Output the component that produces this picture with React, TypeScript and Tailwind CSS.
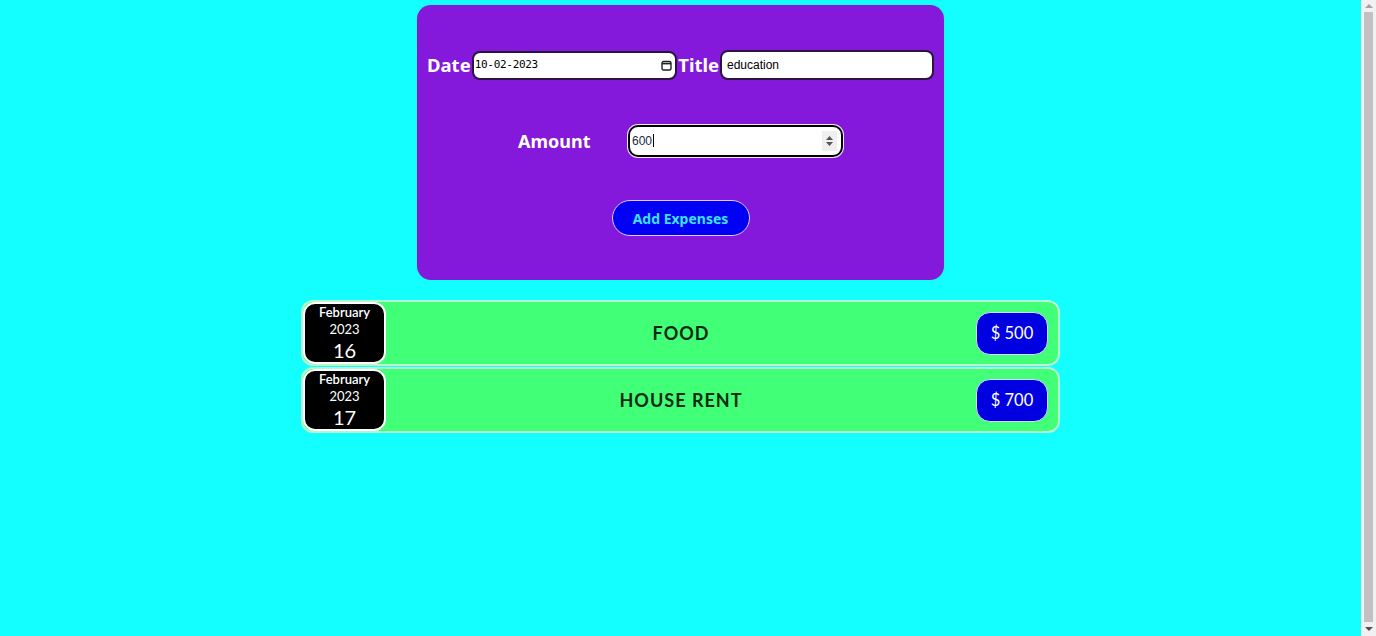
import React from 'react';

const expenses = [
  { month: 'February', year: '2023', day: '16', title: 'FOOD', amount: '$ 500' },
  { month: 'February', year: '2023', day: '17', title: 'HOUSE RENT', amount: '$ 700' },
];

const CalendarIcon = () => (
  <svg width="11" height="11" viewBox="0 0 11 11" fill="none" className="shrink-0">
    <rect x="1" y="1.5" width="9" height="8.5" rx="1.5" stroke="#222" strokeWidth="1.4" />
    <line x1="1" y1="3.6" x2="10" y2="3.6" stroke="#222" strokeWidth="1.6" />
  </svg>
);

const Spinner = () => (
  <div className="flex h-[20px] w-[15px] flex-col items-center justify-center gap-[2px] bg-[#efefef]">
    <svg width="7" height="4" viewBox="0 0 7 4"><path d="M0 4L3.5 0L7 4Z" fill="#555" /></svg>
    <svg width="7" height="4" viewBox="0 0 7 4"><path d="M0 0L3.5 4L7 0Z" fill="#555" /></svg>
  </div>
);

// the window's scroll bar, as it shows in the screenshot
const ScrollBar = () => (
  <div className="flex w-[15px] shrink-0 flex-col items-center bg-[#f1f1f1]">
    <div className="flex h-[12px] items-center">
      <svg width="8" height="4" viewBox="0 0 8 4"><path d="M0 4L4 0L8 4Z" fill="#a3a3a3" /></svg>
    </div>
    <div className="w-[9px] flex-1 bg-[#c1c1c1]" />
    <div className="flex h-[14px] items-center">
      <svg width="8" height="4" viewBox="0 0 8 4"><path d="M0 0L4 4L8 0Z" fill="#505050" /></svg>
    </div>
  </div>
);

const ExpenseForm = () => (
  <form
    className="mx-auto h-[275px] w-[527px] rounded-[14px] bg-[#8419dc] px-[10px] pt-[45px]"
    onSubmit={(e) => e.preventDefault()}
  >
    <div className="flex items-center">
      <label className="text-[18.5px] font-bold leading-none text-white">Date</label>
      <div className="ml-[1px] flex h-[29px] flex-1 items-center rounded-[8px] border-2 border-[#2a1540] bg-white pl-[1px] pr-[3px]">
        <span className="flex-1 font-['DejaVu_Sans_Mono',monospace] text-[11px] tracking-[-0.3px] text-black">10-02-2023</span>
        <CalendarIcon />
      </div>
      <label className="ml-[1px] text-[18.5px] font-bold leading-none text-white">Title</label>
      <input
        readOnly
        value="education"
        className="ml-[1px] h-[30px] w-[214px] rounded-[8px] border-2 border-[#2a1540] bg-white px-[5px] font-['Liberation_Sans',sans-serif] text-[12px] text-black outline-none"
      />
    </div>

    <div className="mt-[45px] flex items-center">
      <label className="ml-[91px] w-[71px] whitespace-nowrap text-[18px] font-bold leading-none text-white">Amount</label>
      <div className="ml-[39px] flex h-[32px] w-[215px] items-center rounded-[10px] border-2 border-black bg-white pl-[2px] pr-[4px] shadow-[0_0_0_1px_#f4e8ff]">
        <span className="flex-1 font-['Liberation_Sans',sans-serif] text-[12px] text-[#1a2a3a]">
          600<span className="ml-[1px] inline-block h-[13px] w-px translate-y-[2px] bg-black" />
        </span>
        <Spinner />
      </div>
    </div>

    <div className="mt-[43px] flex justify-center">
      <button
        type="submit"
        className="h-[36px] w-[138px] rounded-full border border-[#e2c8ff] bg-[#0000f5] text-[14px] font-bold text-[#3ce2ff]"
      >
        Add Expenses
      </button>
    </div>
  </form>
);

const ExpenseItem = ({ item }: { item: (typeof expenses)[number] }) => (
  <div className="flex h-[66px] items-center rounded-[12px] border-2 border-[#b7f7cf] bg-[#42ff78]">
    <div className="flex h-[62px] w-[83px] flex-col items-center justify-center rounded-[12px] border-2 border-white bg-black text-white">
      <span className="text-[13px] font-semibold leading-[17px]">{item.month}</span>
      <span className="text-[13px] leading-[17px]">{item.year}</span>
      <span className="text-[20px] leading-[24px]">{item.day}</span>
    </div>
    <h2 className="flex-1 text-center text-[18px] font-bold tracking-[1px] text-[#0b2a12]">{item.title}</h2>
    <div className="mr-[10px] flex h-[43px] w-[72px] items-center justify-center rounded-[14px] border border-[#d8d8ff] bg-[#0000e0] text-[16.5px] text-white">
      {item.amount}
    </div>
  </div>
);

export default function App() {
  return (
    <div className="flex h-[636px] overflow-hidden bg-[#13ffff] font-['Noto_Sans',sans-serif]">
      <main className="flex-1 pt-[5px]">
        <ExpenseForm />
        <div className="mx-auto mt-[20px] flex w-[759px] flex-col gap-px font-['Lato',sans-serif]">
          {expenses.map((item) => (
            <ExpenseItem key={item.day} item={item} />
          ))}
        </div>
      </main>
      <ScrollBar />
    </div>
  );
}
